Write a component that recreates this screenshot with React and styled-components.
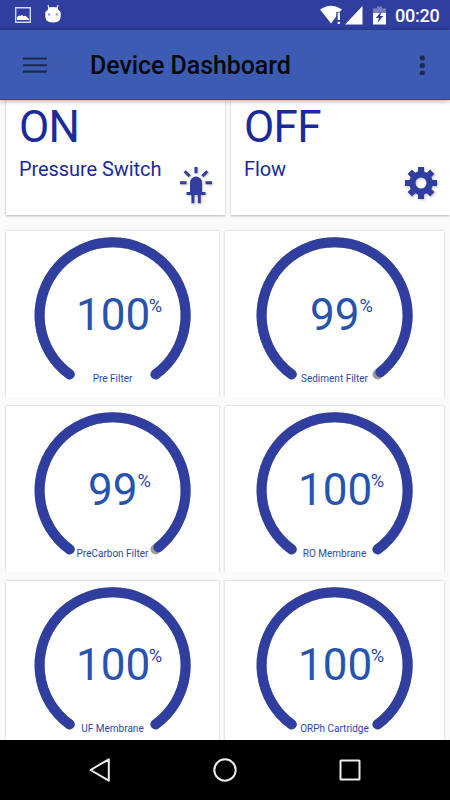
import React from "react";
import styled, { createGlobalStyle } from "styled-components";

const filters = [
  { name: "Pre Filter", value: 100 },
  { name: "Sediment Filter", value: 99 },
  { name: "PreCarbon Filter", value: 99 },
  { name: "RO Membrane", value: 100 },
  { name: "UF Membrane", value: 100 },
  { name: "ORPh Cartridge", value: 100 },
];

const App = () => {
  return (
    <Screen>
      <GlobalStyle />
      <StatusBar />
      <Toolbar>
        <MenuIcon />
        <h1>Device Dashboard</h1>
        <MoreIcon />
      </Toolbar>
      <Content>
        <Switches>
          <SwitchCard>
            <h2>ON</h2>
            <p>Pressure Switch</p>
            <LedIcon />
          </SwitchCard>
          <SwitchCard>
            <h2>OFF</h2>
            <p>Flow</p>
            <GearIcon />
          </SwitchCard>
        </Switches>
        <Filters>
          {filters.map((filter) => (
            <FilterCard key={filter.name}>
              <Gauge value={filter.value} name={filter.name} />
            </FilterCard>
          ))}
        </Filters>
      </Content>
      <NavBar />
    </Screen>
  );
};

const StatusBar = () => (
  <Status>
    <svg width="16" height="16" viewBox="0 0 16 16">
      <path d="M.7.7h14.6v14.6H.7z" fill="none" stroke="#d5d8f0" strokeWidth="1.4" />
      <path
        d="M2 13V10.2l1-.9 1-.8 1.300.4L7 7.800l1.300 1.500L10 8.700l1.500.9L14 12v1z"
        fill="#fff"
      />
    </svg>
    <svg width="16" height="19" viewBox="0 0 16 19">
      <path d="M4 4.500 3 1M12 4.500 13 1" stroke="#e8eaf8" strokeWidth="1.200" />
      <path
        d="M3.500 3.500Q8 2.300 12.500 3.500L13 5.500Q15.700 7 15.800 10.500Q15.800 14 14.500 16.500Q12.500 18.500 8 18.500T1.500 16.500Q.2 14 .2 10.500Q.3 7 3 5.500z"
        fill="#fff"
      />
      <path d="M3.200 9.500h2v2h-2zM10.800 9.500h2v2h-2z" fill="#8990cb" />
    </svg>
    <Spacer />
    <svg width="22" height="20" viewBox="0 0 22 20">
      <path d="M0 4.600Q11 -3.200 22 4.600L18.500 8.200L11.100 18.500z" fill="#fff" />
      <path d="M16.300 6.800h5.200V20h-5.200z" fill="#303f9f" />
      <path d="M17.700 7.500h2.200v7.500h-2.200zM17.700 16.700h2.200v2.300h-2.200z" fill="#fff" />
    </svg>
    <svg width="18" height="19" viewBox="0 0 18 19">
      <path d="M17.500 0v18.500H0z" fill="#fff" />
    </svg>
    <svg width="13" height="19" viewBox="0 0 13 19">
      <path d="M0 2.500h4V.5h5v2h4V7H0z" fill="#7780c3" />
      <path d="M0 7h13v11.500H0z" fill="#fff" />
      <path d="M8.200 5.500 2.800 12h3.100l-1.200 4.500L10.300 10H7.200z" fill="#303f9f" />
    </svg>
    <Clock>00:20</Clock>
  </Status>
);

const MenuIcon = () => (
  <svg width="24" height="18" viewBox="0 0 24 18">
    <path d="M0 2.500h24M0 9.200h24M0 15.600h24" stroke="#1c2a50" strokeWidth="2.100" />
  </svg>
);

const MoreIcon = () => (
  <svg width="6" height="20" viewBox="0 0 6 20">
    <circle cx="3.300" cy="3" r="2.600" />
    <circle cx="3.300" cy="10.500" r="2.600" />
    <circle cx="3.300" cy="18" r="2.600" />
  </svg>
);

const LedIcon = () => (
  <svg width="32" height="37" viewBox="0 0 32 37">
    <path
      d="M16 0v6.300M4.700 4.200l5 5M27.300 4.200l-5 5M0 15.700h6.500M25.500 15.700H32"
      stroke="#303f9f"
      strokeWidth="3"
    />
    <path
      d="M10 25V15.500a6 6 0 0 1 12 0V25h3.500v3h-4.700v8.300h-3V28h-3.400v8.300h-3V28H6.500v-3z"
      fill="#303f9f"
    />
  </svg>
);

const GearIcon = () => (
  <svg width="32" height="32" viewBox="0 0 32 32">
    <path
      d="M13 0h6v4.500l2.900 1.200L25.100 2.600l4.300 4.300-3.100 3.200 1.200 2.900H32v6h-4.500l-1.200 2.900 3.100 3.200-4.300 4.300-3.200-3.100-2.900 1.200V32h-6v-4.500l-2.900-1.200-3.200 3.100-4.300-4.300 3.100-3.200L4.500 19H0v-6h4.500l1.200-2.900-3.100-3.200 4.300-4.300 3.200 3.100L13 4.500zM16 10.500a5.500 5.500 0 1 0 0 11a5.500 5.500 0 0 0 0-11z"
      fill="#303f9f"
      fillRule="evenodd"
    />
  </svg>
);

// 288 degree arc, open at the bottom
const ARC = "M35.7 138.4A73 73 0 1 1 121.500 138.4";

const Gauge = ({ value, name }) => (
  <GaugeBox>
    <svg width="158" height="158" viewBox="0 0 158 158">
      <Arc d={ARC} stroke="#9c9c9c" />
      <Arc
        d={ARC}
        stroke="#303f9f"
        pathLength="100"
        strokeDasharray={value < 100 ? `${value} 100` : undefined}
      />
    </svg>
    <Reading $full={value === 100}>
      {value}
      <sup>%</sup>
    </Reading>
    <Name>{name}</Name>
  </GaugeBox>
);

const NavBar = () => (
  <Nav>
    <svg width="24" height="26" viewBox="0 0 24 26">
      <path d="M20.800 2.300v21.400L2.500 13z" />
    </svg>
    <svg width="24" height="26" viewBox="0 0 24 26">
      <circle cx="12" cy="13" r="10.700" />
    </svg>
    <svg width="24" height="26" viewBox="0 0 24 26">
      <rect x="2.500" y="3.500" width="19" height="19" rx=".5" />
    </svg>
  </Nav>
);

//Styled Components
const GlobalStyle = createGlobalStyle`
  * {
    margin: 0;
    padding: 0;
    box-sizing: border-box;
  }
  body {
    font-family: Roboto, "Liberation Sans", sans-serif;
    background: #fafafa;
  }
  svg {
    display: block;
    flex-shrink: 0;
  }
`;

const Screen = styled.div`
  width: 450px;
  height: 800px;
  display: flex;
  flex-direction: column;
  overflow: hidden;
`;

const Status = styled.div`
  height: 30px;
  flex-shrink: 0;
  display: flex;
  align-items: center;
  padding: 0 10px 0 15px;
  background: #303f9f;
  svg:nth-child(2) {
    margin: -3px 0 0 14px;
  }
  svg:nth-child(5) {
    margin: 0 10px 0 3px;
  }
`;

const Spacer = styled.div`
  flex: 1;
`;

const Clock = styled.span`
  width: 45px;
  margin-left: 9px;
  color: white;
  font-size: 18px;
  font-weight: 500;
  letter-spacing: -0.25px;
  line-height: 21px;
  white-space: nowrap;
`;

const Toolbar = styled.header`
  height: 70px;
  flex-shrink: 0;
  display: flex;
  align-items: center;
  padding: 0 25px 0 23px;
  background: #3c5bb3;
  border-bottom: 1px solid #0f47a8;
  box-shadow: 0 1px 5px rgba(0, 0, 0, 0.35);
  z-index: 1;
  h1 {
    flex: 1;
    margin: 2px 0 0 43px;
    color: #06080d;
    font-size: 25px;
    font-weight: 500;
    letter-spacing: -0.07px;
  }
  svg {
    fill: #1c2a50;
  }
`;

const Content = styled.main`
  flex: 1;
  min-height: 0;
  overflow: hidden;
  padding-left: 6px;
  background: #fafafa;
`;

const Switches = styled.div`
  display: grid;
  grid-template-columns: 219px 219px;
  column-gap: 6px;
`;

const Card = styled.div`
  background: white;
  box-shadow: 0 1px 2px rgba(0, 0, 0, 0.28);
`;

const SwitchCard = styled(Card)`
  height: 115px;
  display: grid;
  grid-template-columns: 1fr auto;
  grid-template-rows: 55px 28px 1fr;
  padding: 0 13px;
  color: #1a2a9c;
  h2 {
    grid-column: 1 / 3;
    font-size: 44px;
    font-weight: 400;
    letter-spacing: -0.7px;
    line-height: 55px;
  }
  p {
    font-size: 20px;
    letter-spacing: -0.07px;
    line-height: 28px;
    white-space: nowrap;
  }
  svg {
    grid-column: 2;
    grid-row: 2 / 4;
    margin-top: 12px;
    filter: drop-shadow(1px 1px 1px rgba(0, 0, 0, 0.25));
  }
`;

const Filters = styled.div`
  display: grid;
  grid-template-columns: 213px 219px;
  grid-auto-rows: 166px;
  gap: 9px 6px;
  margin-top: 16px;
`;

// the card's shadow is cut off at its bottom edge
const FilterCard = styled(Card)`
  display: flex;
  justify-content: center;
  padding-top: 5px;
  box-shadow: 0 0 2px rgba(0, 0, 0, 0.25);
  clip-path: inset(-3px -3px 0 -3px);
`;

const GaugeBox = styled.div`
  width: 158px;
  height: 158px;
  display: grid;
  justify-items: center;
  align-items: start;
  > * {
    grid-area: 1 / 1;
  }
`;

const Arc = styled.path`
  fill: none;
  stroke-width: 10;
  stroke-linecap: round;
`;

const Reading = styled.div`
  display: flex;
  align-items: flex-start;
  width: max-content;
  margin-top: 57px;
  margin-left: ${({ $full }) => ($full ? "13px" : "14px")};
  color: #2653b0;
  font-size: 44px;
  line-height: 44px;
  sup {
    margin-left: ${({ $full }) => ($full ? "-1.5px" : "0")};
    color: #2c43a8;
    font-size: 18.3px;
    line-height: 26px;
  }
`;

const Name = styled.span`
  margin-top: 136px;
  color: #2c48ab;
  font-size: 10px;
  line-height: 14px;
`;

const Nav = styled.nav`
  height: 60px;
  flex-shrink: 0;
  display: flex;
  align-items: center;
  justify-content: center;
  gap: 101px;
  background: black;
  svg {
    fill: none;
    stroke: #ececec;
    stroke-width: 2;
    stroke-linejoin: round;
  }
`;

export default App;
